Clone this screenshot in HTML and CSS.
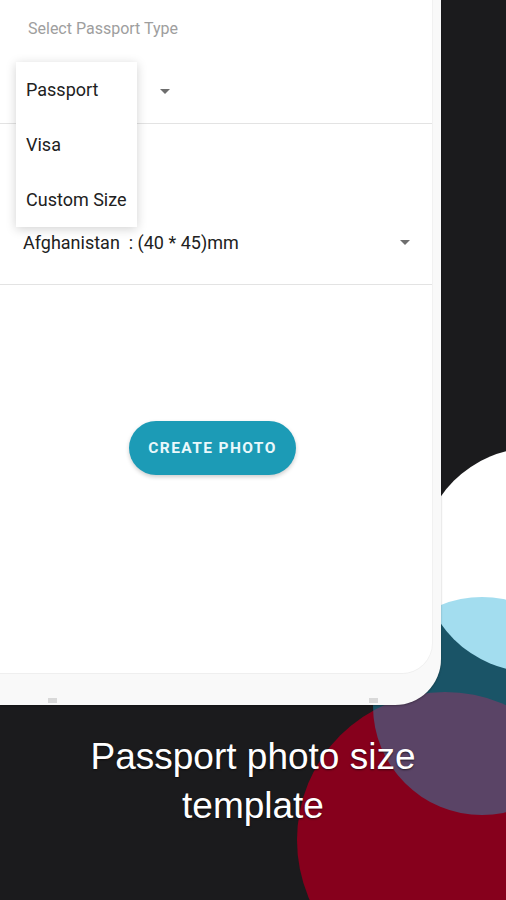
FILE: index.html
```html
<!DOCTYPE html>
<html lang="en">
<head>
  <meta charset="UTF-8" />
  <title>Passport photo size template</title>
  <meta name="viewport" content="width=device-width, initial-scale=1" />
  <link rel="stylesheet" href="styles.css">
</head>
<body>

  <svg class="backdrop" width="506" height="900" viewBox="0 0 506 900" aria-hidden="true">
    <circle cx="533" cy="560" r="112" fill="#ffffff" />
    <circle cx="445" cy="840" r="148" fill="#86001c" />
    <circle cx="482" cy="706" r="109" fill="rgba(24, 170, 216, 0.4)" />
  </svg>

  <main class="shot">
    <div class="phone">
      <div class="screen">

        <div class="field field-type">
          <div class="field-label">Select Passport Type</div>
          <div class="select-row">
            <!-- selected value is covered by the open menu -->
            <span class="select-spacer"></span>
            <span class="caret"></span>
          </div>
        </div>

        <div class="field field-country">
          <div class="select-row">
            <span class="select-value">Afghanistan  : (40 * 45)mm</span>
            <span class="caret"></span>
          </div>
        </div>

        <div class="actions">
          <button class="btn-create">CREATE PHOTO</button>
        </div>

        <ul class="menu">
          <li class="menu-item">Passport</li>
          <li class="menu-item">Visa</li>
          <li class="menu-item">Custom Size</li>
        </ul>
      </div>

      <div class="bezel-bottom">
        <span class="nub"></span>
        <span class="nub"></span>
      </div>
    </div>

    <h2 class="caption">Passport photo size<br>template</h2>
  </main>

</body>
</html>
```

FILE: styles.css
```css
:root {
  --color-bg: #1b1b1d;
  --color-screen: #ffffff;
  --color-bezel: #f9f9f9;
  --color-text: #212121;
  --color-label: #9e9e9e;
  --color-line: #e3e3e3;
  --color-caret: #6e6e6e;
  --color-button: #1c9bb6;
}

html, body {
  margin: 0;
  padding: 0;
}

body {
  width: 506px;
  height: 900px;
  overflow: hidden;
  background-color: var(--color-bg);
  position: relative;
  font-family: Roboto, 'Liberation Sans', sans-serif;
}

.backdrop {
  position: absolute;
  left: 0;
  top: 0;
  z-index: 0;
}

.shot {
  position: relative;
  z-index: 1;
}

.phone {
  width: 441px;
  background-color: var(--color-bezel);
  border-radius: 0 0 46px 0;
  box-shadow: 0 1px 2px rgba(0, 0, 0, 0.3);
}

.screen {
  position: relative;
  width: 432px;
  height: 673px;
  background-color: var(--color-screen);
  border-radius: 0 0 30px 0;
  box-shadow: 1px 0 0 #f1f1f1, 0 1px 0 #efefef;
}

.field {
  border-bottom: 1px solid var(--color-line);
  box-sizing: border-box;
}

.field-type {
  padding: 18px 0 0 28px;
  height: 124px;
}

.field-label {
  font-size: 16px;
  line-height: 22px;
  color: var(--color-label);
}

.field-type .select-row {
  margin-top: 40px;
}

.select-row {
  display: flex;
  align-items: center;
  height: 22px;
}

.select-spacer {
  width: 132px;
}

.select-value {
  font-size: 18px;
  color: var(--color-text);
  white-space: pre;
}

.caret {
  width: 0;
  height: 0;
  border-left: 5px solid transparent;
  border-right: 5px solid transparent;
  border-top: 5px solid var(--color-caret);
}

.field-country {
  padding: 107px 22px 0 23px;
  height: 161px;
}

.field-country .select-row {
  justify-content: space-between;
}

.actions {
  padding: 136px 0 0 129px;
}

.btn-create {
  width: 167px;
  height: 54px;
  border: none;
  border-radius: 27px;
  background-color: var(--color-button);
  color: #eaf8fb;
  font-family: Roboto, 'Liberation Sans', sans-serif;
  font-size: 15.5px;
  font-weight: 700;
  letter-spacing: 1.4px;
  box-shadow: 0 2px 4px rgba(0, 0, 0, 0.2);
  cursor: pointer;
}

/* open dropdown sits over the first field */
.menu {
  position: absolute;
  left: 16px;
  top: 62px;
  width: 121px;
  margin: 0;
  padding: 0;
  list-style: none;
  background-color: #ffffff;
  box-shadow: 0 2px 10px rgba(0, 0, 0, 0.18);
}

.menu-item {
  height: 55px;
  line-height: 55px;
  padding-left: 10px;
  font-size: 18px;
  color: var(--color-text);
}

.bezel-bottom {
  height: 32px;
  display: flex;
  align-items: flex-end;
  justify-content: space-between;
  padding: 0 63px 2px 48px;
  box-sizing: border-box;
}

.nub {
  width: 9px;
  height: 5px;
  background-color: #d9d9d9;
}

.caption {
  margin: 27px 0 0;
  text-align: center;
  font-family: 'Liberation Sans', Arial, sans-serif;
  font-size: 37px;
  line-height: 49px;
  font-weight: 400;
  color: #ffffff;
  text-shadow: 0 1px 2px rgba(0, 0, 0, 0.6);
}
```
